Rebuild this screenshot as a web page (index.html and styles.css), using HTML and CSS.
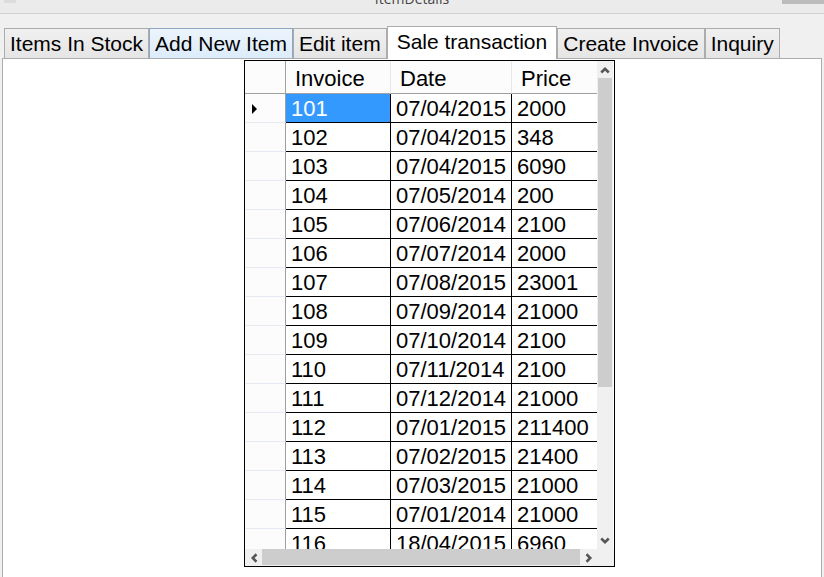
FILE: index.html
```
<!DOCTYPE html>
<html lang="en">
<head>
<meta charset="utf-8">
<title>ItemDetails</title>
<link rel="stylesheet" href="styles.css">
</head>
<body>
<header class="titlebar">
  <span class="app-icon"></span>
  <h1 class="title">ItemDetails</h1>
  <span class="caption-button"></span>
</header>
<nav class="tabs" role="tablist">
  <button class="tab" role="tab">Items In Stock</button>
  <button class="tab tab-hot" role="tab">Add New Item</button>
  <button class="tab" role="tab">Edit item</button>
  <button class="tab tab-active" role="tab" aria-selected="true">Sale transaction</button>
  <button class="tab" role="tab">Create Invoice</button>
  <button class="tab" role="tab">Inquiry</button>
</nav>
<main class="page">
  <section class="data-grid">
    <div class="viewport">
      <table class="table">
        <colgroup><col class="col-head"><col class="col-invoice"><col class="col-date"><col class="col-price"></colgroup>
        <thead><tr><th></th><th>Invoice</th><th>Date</th><th>Price</th></tr></thead>
        <tbody>
          <tr><th><svg class="marker" viewBox="0 0 5 10"><path d="M0 0L5 5L0 10Z"/></svg></th><td class="selected">101</td><td>07/04/2015</td><td>2000</td></tr>
          <tr><th></th><td>102</td><td>07/04/2015</td><td>348</td></tr>
          <tr><th></th><td>103</td><td>07/04/2015</td><td>6090</td></tr>
          <tr><th></th><td>104</td><td>07/05/2014</td><td>200</td></tr>
          <tr><th></th><td>105</td><td>07/06/2014</td><td>2100</td></tr>
          <tr><th></th><td>106</td><td>07/07/2014</td><td>2000</td></tr>
          <tr><th></th><td>107</td><td>07/08/2015</td><td>23001</td></tr>
          <tr><th></th><td>108</td><td>07/09/2014</td><td>21000</td></tr>
          <tr><th></th><td>109</td><td>07/10/2014</td><td>2100</td></tr>
          <tr><th></th><td>110</td><td>07/11/2014</td><td>2100</td></tr>
          <tr><th></th><td>111</td><td>07/12/2014</td><td>21000</td></tr>
          <tr><th></th><td>112</td><td>07/01/2015</td><td>211400</td></tr>
          <tr><th></th><td>113</td><td>07/02/2015</td><td>21400</td></tr>
          <tr><th></th><td>114</td><td>07/03/2015</td><td>21000</td></tr>
          <tr><th></th><td>115</td><td>07/01/2014</td><td>21000</td></tr>
          <tr><th></th><td>116</td><td>18/04/2015</td><td>6960</td></tr>
        </tbody>
      </table>
    </div>
    <div class="scroll-v">
      <button class="arrow" aria-label="Scroll up"><svg viewBox="0 0 8 6"><path d="M1 5L4 2L7 5"/></svg></button>
      <div class="track"><div class="thumb"></div></div>
      <button class="arrow" aria-label="Scroll down"><svg viewBox="0 0 8 6"><path d="M1 1L4 4L7 1"/></svg></button>
    </div>
    <div class="scroll-h">
      <button class="arrow" aria-label="Scroll left"><svg viewBox="0 0 6 8"><path d="M5 1L2 4L5 7"/></svg></button>
      <div class="track"><div class="thumb"></div></div>
      <button class="arrow" aria-label="Scroll right"><svg viewBox="0 0 6 8"><path d="M1 1L4 4L1 7"/></svg></button>
    </div>
  </section>
</main>
</body>
</html>
```
FILE: styles.css
```
* {
  box-sizing: border-box;
}

body {
  margin: 0;
  height: 100vh;
  overflow: hidden;
  display: flex;
  flex-direction: column;
  background: #f0f0f0;
  color: #000;
  font: 22px/27px "Liberation Sans", Arial, sans-serif;
}

button {
  font: inherit;
  color: inherit;
  border: 0;
  margin: 0;
}

.titlebar {
  height: 14px;
  flex: none;
  display: grid;
  grid-template-columns: 1fr auto 1fr;
  grid-template-rows: 13px;
  align-items: end;
  overflow: hidden;
  background: #ebebeb;
  border-bottom: 1px solid #d2d2d2;
}

.title {
  margin: 0;
  padding-bottom: 4px;
  font: 14px/20px "Open Sans", "Noto Sans", sans-serif;
  color: #444;
}

.app-icon {
  align-self: start;
  width: 12px;
  height: 3px;
  margin-left: 4px;
  background: #dcdcdc;
}

.caption-button {
  align-self: start;
  justify-self: end;
  width: 42px;
  height: 4px;
  background: #bcbcbc;
}

.tabs {
  flex: none;
  display: flex;
  align-items: flex-end;
  padding: 12px 4px 0;
  font-size: 21px;
}

.tab {
  flex: none;
  height: 30px;
  padding: 0 5px;
  white-space: nowrap;
  border: 1px solid #acacac;
  border-bottom: 0;
  background: linear-gradient(#f0f0f0, #e5e5e5);
}

.tab-hot {
  background: linear-gradient(#ecf4fc, #dcecfc);
  border-color: #8fa5c0;
}

.tab-active {
  position: relative;
  height: 33px;
  padding: 0 9px 3px;
  margin-bottom: -1px;
  background: #fff;
}

.page {
  flex: 1;
  margin: 0 2px;
  padding: 1px 0 0 241px;
  border: 1px solid #acacac;
  border-bottom: 0;
  background: #fff;
}

.data-grid {
  display: grid;
  grid-template-columns: 352px 17px;
  grid-template-rows: 1fr 17px;
  width: max-content;
  height: calc(100vh - 70px);
  border: 1px solid #000;
  background: #f0f0f0;
}

.viewport {
  overflow: hidden;
  background: #fff;
}

.table {
  width: 100%;
  table-layout: fixed;
  border-collapse: separate;
  border-spacing: 0;
}

.col-head {
  width: 41px;
}

.col-invoice {
  width: 105px;
}

.col-date {
  width: 121px;
}

.table th,
.table td {
  height: 29px;
  padding: 1px 5px 0;
  text-align: left;
  font-weight: normal;
  white-space: nowrap;
  border-right: 1px solid #000;
  border-bottom: 1px solid #000;
}

.table thead th {
  height: 33px;
  padding: 2px 9px 0;
  background: #fcfcfc;
  border-color: #a0a0a0;
  border-right-color: #e8e8e8;
}

.table tr > :first-child {
  border-right-color: #a0a0a0;
}

.table tbody th {
  background: #fcfcfc;
  border-bottom-color: #e6eaf2;
}

.table tr > :last-child {
  border-right: 0;
}

.table .selected {
  background: #39f;
  color: #fff;
}

.marker {
  display: block;
  width: 5px;
  height: 10px;
  margin-left: 2px;
}

.scroll-v,
.scroll-h {
  display: flex;
}

.scroll-v {
  flex-direction: column;
  padding: 0 1px;
  border-right: 1px solid #fff;
}

.scroll-h {
  grid-column: 1;
}

.arrow {
  flex: none;
  display: flex;
  align-items: center;
  justify-content: center;
  width: 17px;
  height: 17px;
  padding: 0;
  background: #f0f0f0;
}

.scroll-v .arrow {
  width: auto;
}

.arrow svg {
  width: 10px;
  height: 10px;
  fill: none;
  stroke: #555;
  stroke-width: 2;
}

.track {
  flex: 1;
}

.thumb {
  background: #cdcdcd;
}

.scroll-v .thumb {
  height: 68%;
}

.scroll-h .thumb {
  width: 100%;
  height: 16px;
}
```
